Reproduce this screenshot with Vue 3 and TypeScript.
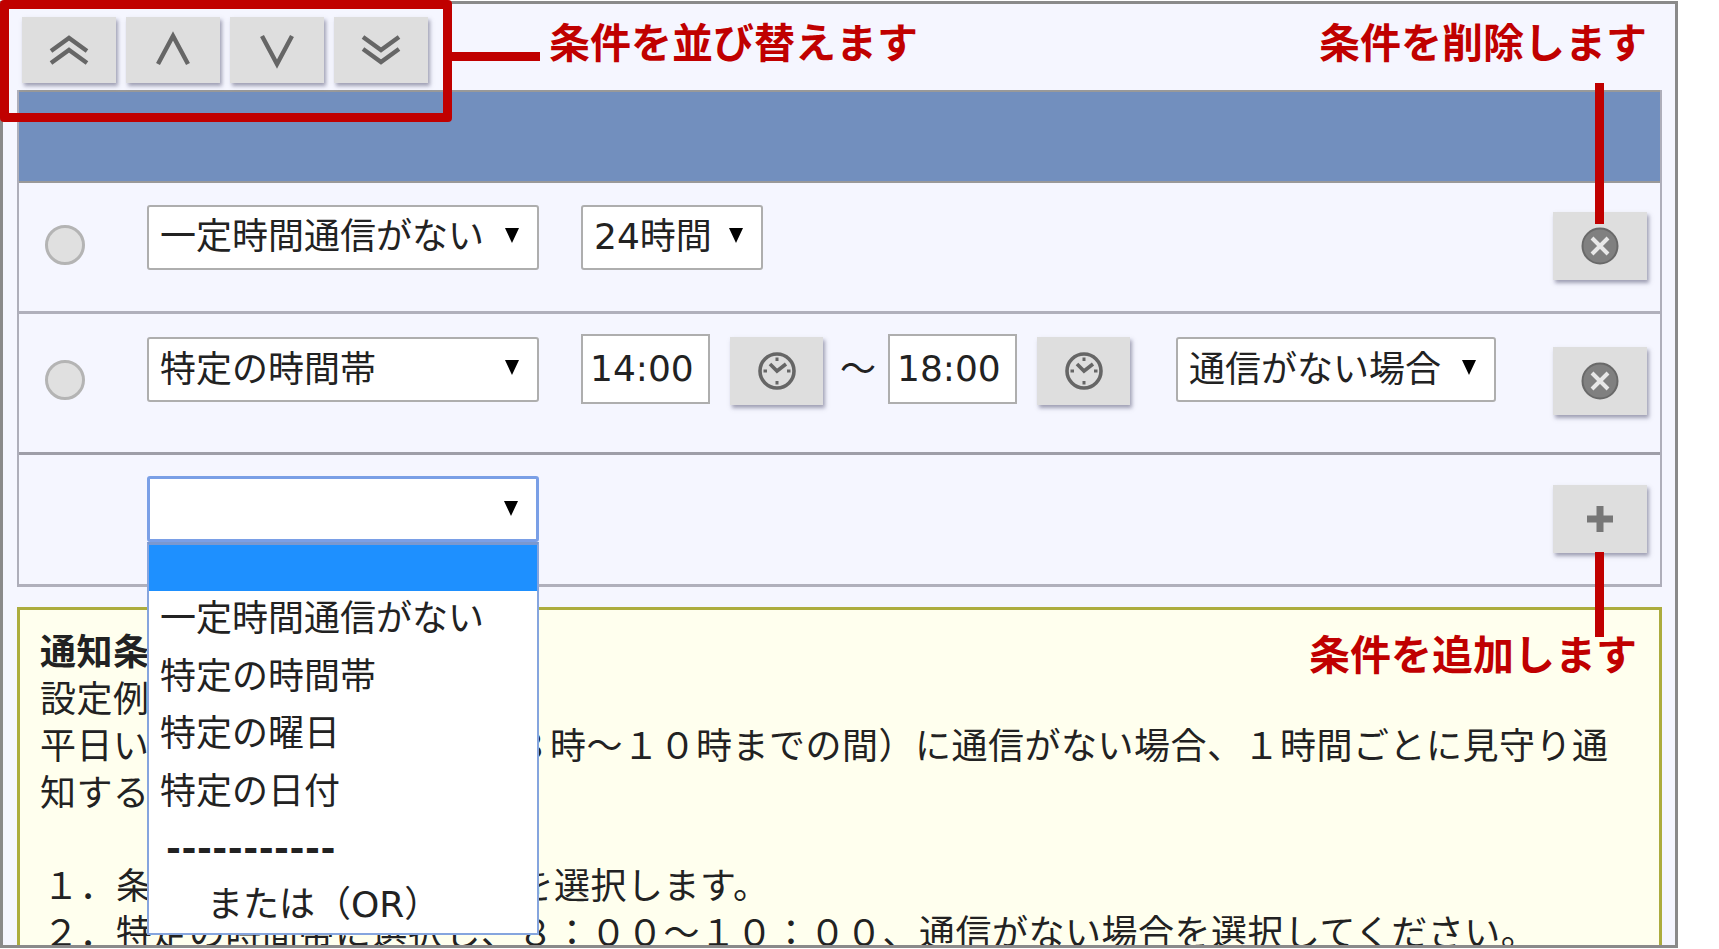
<script setup lang="ts">
const moveButtons: { name: string; paths: string[] }[] = [
  { name: 'top', paths: ['M5 21 L23 8 L41 21', 'M5 33 L23 20 L41 33'] },
  { name: 'up', paths: ['M8 34 L23 6 L38 34'] },
  { name: 'down', paths: ['M8 6 L23 34 L38 6'] },
  { name: 'bottom', paths: ['M5 7 L23 20 L41 7', 'M5 19 L23 32 L41 19'] },
]
const options: string[] = ['一定時間通信がない', '特定の時間帯', '特定の曜日', '特定の日付']
</script>

<template>
  <div class="page">
    <div class="frame">
      <div class="toolbar">
        <button v-for="b in moveButtons" :key="b.name" class="btn move" type="button">
          <svg class="icon" width="46" height="40" viewBox="0 0 46 40" fill="none" stroke="#666" stroke-width="4.4">
            <path v-for="p in b.paths" :key="p" :d="p" />
          </svg>
        </button>
      </div>

      <div class="table">
        <div class="head"></div>

        <div class="row row-one">
          <span class="radio r1"></span>
          <div class="select wide"><span>一定時間通信がない</span><i class="arrow"></i></div>
          <div class="select hours"><span>24時間</span><i class="arrow"></i></div>
          <button class="btn side del1" type="button">
            <svg class="icon" width="40" height="40" viewBox="0 0 40 40">
              <circle cx="20" cy="20" r="17.5" fill="#808080" stroke="#696969" stroke-width="2" />
              <path d="M12 12 L28 28 M28 12 L12 28" stroke="#e8e8e8" stroke-width="4" />
            </svg>
          </button>
        </div>

        <div class="row row-two">
          <span class="radio r2"></span>
          <div class="select wide"><span>特定の時間帯</span><i class="arrow"></i></div>
          <div class="time first">14:00</div>
          <button class="btn clock" type="button">
            <svg class="icon" width="40" height="40" viewBox="0 0 40 40" fill="none" stroke="#666">
              <circle cx="20" cy="20" r="17" stroke-width="3.6" />
              <path d="M13 13 L20 20 L29 13" stroke-width="3.6" />
              <path d="M20 6.5 V10 M20 30 V33.5 M6.5 20 H10 M30 20 H33.5" stroke-width="3" />
            </svg>
          </button>
          <span class="tilde">～</span>
          <div class="time">18:00</div>
          <button class="btn clock" type="button">
            <svg class="icon" width="40" height="40" viewBox="0 0 40 40" fill="none" stroke="#666">
              <circle cx="20" cy="20" r="17" stroke-width="3.6" />
              <path d="M13 13 L20 20 L29 13" stroke-width="3.6" />
              <path d="M20 6.5 V10 M20 30 V33.5 M6.5 20 H10 M30 20 H33.5" stroke-width="3" />
            </svg>
          </button>
          <div class="select kind"><span>通信がない場合</span><i class="arrow"></i></div>
          <button class="btn side del2" type="button">
            <svg class="icon" width="40" height="40" viewBox="0 0 40 40">
              <circle cx="20" cy="20" r="17.5" fill="#808080" stroke="#696969" stroke-width="2" />
              <path d="M12 12 L28 28 M28 12 L12 28" stroke="#e8e8e8" stroke-width="4" />
            </svg>
          </button>
        </div>

        <div class="row row-three">
          <div class="select wide open">
            <span></span><i class="arrow"></i>
            <div class="menu">
              <div class="opt active"></div>
              <div v-for="o in options" :key="o" class="opt">{{ o }}</div>
              <div class="opt sep">-----------</div>
              <div class="opt indent">または（OR）</div>
            </div>
          </div>
          <button class="btn side add" type="button">
            <svg class="icon" width="30" height="30" viewBox="0 0 30 30">
              <path d="M15 2 V28 M2 15 H28" stroke="#777" stroke-width="7" />
            </svg>
          </button>
        </div>
      </div>

      <div class="note">
        <div class="line strong">通知条件の設定</div>
        <div class="line">設定例：</div>
        <div class="line">平日いつでも、朝の時間帯（８時～１０時までの間）に通信がない場合、１時間ごとに見守り通</div>
        <div class="line">知する場合</div>
        <div class="line blank">&nbsp;</div>
        <div class="line item">１．条件で「特定の時間帯」を選択します。</div>
        <div class="line item">２．特定の時間帯に選択し、８：００～１０：００、通信がない場合を選択してください。</div>
      </div>
    </div>

    <div class="mark box"></div>
    <div class="mark link-h"></div>
    <div class="mark link-del"></div>
    <div class="mark link-add"></div>
    <div class="label l-sort">条件を並び替えます</div>
    <div class="label l-del">条件を削除します</div>
    <div class="label l-add">条件を追加します</div>
  </div>
</template>

<style scoped>
.page {
  position: relative;
  width: 1719px;
  height: 949px;
  overflow: hidden;
  background: #fff;
  font-family: "DejaVu Sans", "Noto Sans CJK JP", sans-serif;
  font-size: 36px;
  color: #222;
}
.frame {
  box-sizing: border-box;
  width: 1678px;
  height: 947px;
  margin-top: 1px;
  border: 3px solid #8a8a8a;
  background: #f5f6ff;
  overflow: hidden;
}
.toolbar {
  display: flex;
  gap: 10px;
  height: 86px;
  padding: 13px 0 0 19px;
  box-sizing: border-box;
}
.btn {
  display: flex;
  align-items: center;
  justify-content: center;
  padding: 0;
  border: 0;
  background: #dedede;
  box-shadow: 2px 3px 4px rgba(85, 85, 115, 0.55);
}
.icon {
  filter: blur(0.6px);
}
.move {
  width: 94px;
  height: 66px;
}
.table {
  margin-left: 14px;
  width: 1645px;
  box-sizing: border-box;
  border-left: 2px solid #aeaeba;
  border-right: 2px solid #aeaeba;
}
.head {
  height: 93px;
  box-sizing: border-box;
  background: #728fbe;
  border-top: 2px solid #999;
  border-bottom: 2px solid #999;
}
.row {
  box-sizing: border-box;
  display: flex;
  align-items: flex-start;
  padding-right: 13px;
}
.row-one {
  height: 131px;
  border-bottom: 3px solid #b0b0bc;
}
.row-two {
  height: 141px;
  border-bottom: 3px solid #9e9ea8;
}
.row-three {
  height: 132px;
  border-bottom: 3px solid #b0b0bc;
  padding-left: 128px;
}
.radio {
  box-sizing: border-box;
  flex: none;
  width: 40px;
  height: 40px;
  margin-left: 26px;
  margin-right: 62px;
  border-radius: 50%;
  border: 3px solid #b4b4b4;
  background: #e0e0e0;
}
.r1 {
  margin-top: 42px;
}
.r2 {
  margin-top: 46px;
}
.select {
  box-sizing: border-box;
  position: relative;
  flex: none;
  display: flex;
  align-items: center;
  justify-content: space-between;
  height: 65px;
  margin-top: 22px;
  padding: 0 18px 5px 11px;
  border: 2px solid #aeaeae;
  border-radius: 3px;
  background: #fff;
  white-space: nowrap;
}
.row-one .select span {
  margin-bottom: 4px;
}
.row-two .select {
  margin-top: 23px;
}
.row-two .select span {
  margin-bottom: 2px;
}
.wide {
  width: 392px;
}
.hours {
  width: 182px;
  margin-left: 42px;
}
.kind {
  width: 320px;
  margin-left: 46px;
}
.arrow {
  flex: none;
  width: 0;
  height: 0;
  border-left: 7px solid transparent;
  border-right: 7px solid transparent;
  border-top: 15px solid #000;
}
.open {
  margin-top: 21px;
  height: 66px;
  padding-bottom: 2px;
  border: 3px solid #7a9fe6;
}
.menu {
  position: absolute;
  z-index: 3;
  top: calc(100% + 3px);
  left: -3px;
  right: -3px;
  box-sizing: border-box;
  height: 393px;
  border: 2px solid #86a5de;
  border-top: 3px solid #7a98d0;
  background: #fff;
}
.opt {
  box-sizing: border-box;
  height: 57.5px;
  line-height: 55.4px;
  padding-left: 11px;
}
.active {
  height: 46px;
  background: #1e90ff;
}
.sep {
  padding-left: 17px;
  font-weight: 700;
  letter-spacing: 0.5px;
}
.indent {
  margin-top: -2px;
  padding-left: 58px;
}
.time {
  box-sizing: border-box;
  flex: none;
  width: 129px;
  height: 70px;
  margin-top: 20px;
  padding-left: 7px;
  line-height: 66px;
  border: 2px solid #aeaeae;
  background: #fff;
}
.first {
  margin-left: 42px;
}
.clock {
  flex: none;
  width: 93px;
  height: 68px;
  margin-top: 23px;
  margin-left: 20px;
}
.tilde {
  flex: none;
  width: 65px;
  margin-top: 26px;
  padding-left: 17px;
  box-sizing: border-box;
}
.side {
  flex: none;
  width: 94px;
  height: 68px;
  margin-left: auto;
}
.del1 {
  margin-top: 29px;
}
.del2 {
  margin-top: 33px;
}
.add {
  margin-top: 30px;
}
.note {
  box-sizing: border-box;
  width: 1645px;
  height: 500px;
  margin-top: 20px;
  margin-left: 14px;
  padding: 20px 0 0 20px;
  border: 3px solid #acac3e;
  background: #ffffee;
  letter-spacing: 0.5px;
}
.line {
  height: 46.9px;
  line-height: 46.9px;
  white-space: nowrap;
}
.strong {
  font-weight: 700;
}
.item {
  padding-left: 3px;
}
.mark {
  position: absolute;
  background: #c00000;
}
.box {
  left: 0;
  top: 0;
  width: 452px;
  height: 122px;
  box-sizing: border-box;
  border: 9px solid #c00000;
  border-radius: 4px;
  background: transparent;
}
.link-h {
  left: 452px;
  top: 52px;
  width: 88px;
  height: 9px;
}
.link-del {
  left: 1595px;
  top: 83px;
  width: 9px;
  height: 141px;
}
.link-add {
  left: 1595px;
  top: 552px;
  width: 9px;
  height: 85px;
}
.label {
  position: absolute;
  font-family: "Noto Sans CJK JP", sans-serif;
  font-size: 41px;
  line-height: 41px;
  font-weight: 700;
  color: #c00000;
  white-space: nowrap;
}
.l-sort {
  left: 549px;
  top: 20px;
}
.l-del {
  left: 1319px;
  top: 20px;
}
.l-add {
  left: 1309px;
  top: 632px;
}
</style>
